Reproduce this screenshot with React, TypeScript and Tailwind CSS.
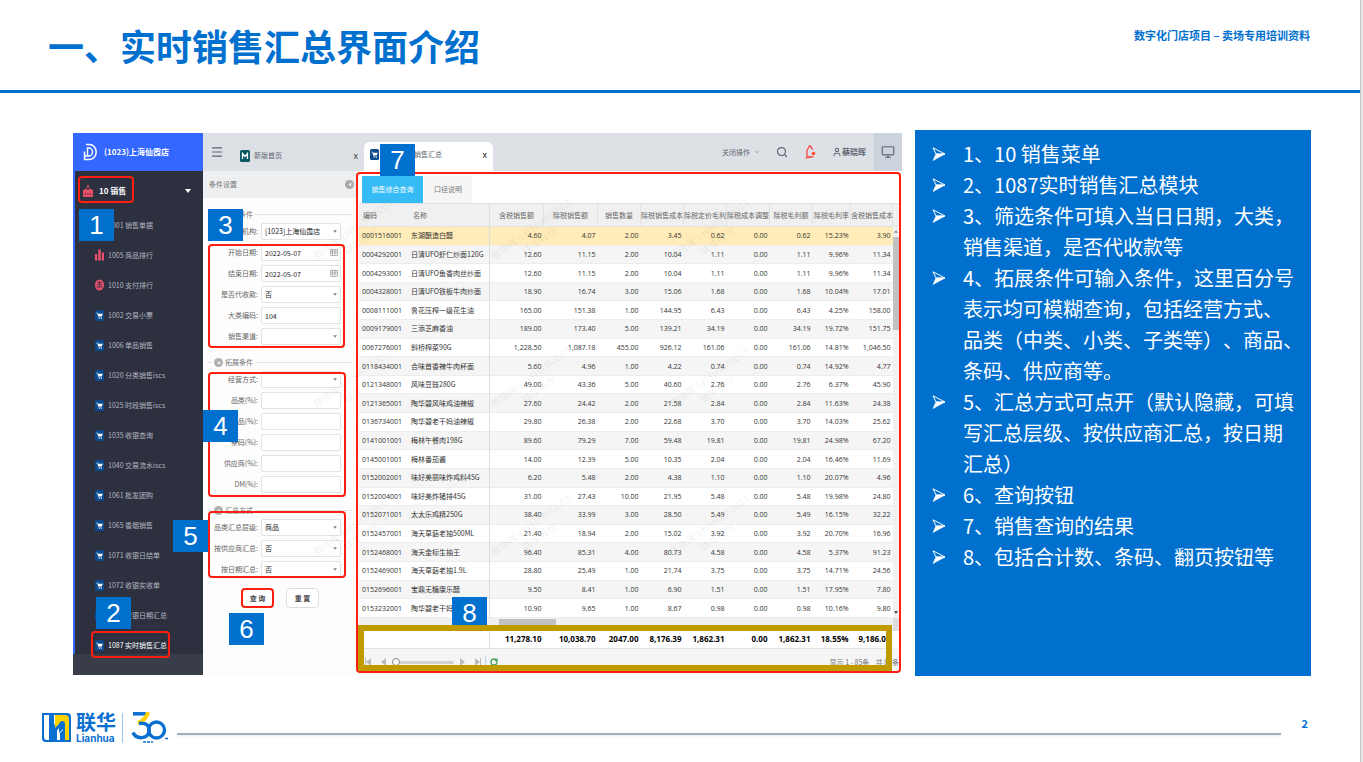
import { ChevronDown, Menu, Monitor, RotateCw, Search, User } from 'lucide-react';
import clsx from 'clsx';

const menus = [
  { name: '1001 销售单据', icon: 'cart' },
  { name: '1005 商品排行', icon: 'bars' },
  { name: '1010 支付排行', icon: 'pay' },
  { name: '1002 交易小票', icon: 'cart' },
  { name: '1006 单品销售', icon: 'cart' },
  { name: '1020 分类销售iscs', icon: 'cart' },
  { name: '1025 时段销售iscs', icon: 'cart' },
  { name: '1035 收银查询', icon: 'cart' },
  { name: '1040 交易流水iscs', icon: 'cart' },
  { name: '1061 批发团购', icon: 'cart' },
  { name: '1065 香烟销售', icon: 'cart' },
  { name: '1071 收银日结单', icon: 'cart' },
  { name: '1072 收银实收单', icon: 'cart' },
  { name: '1073 收银日期汇总', icon: 'cart' },
  { name: '1087 实时销售汇总', icon: 'cart' },
];

type FieldProps = {
  id: string;
  label: string;
  value?: string;
  kind?: 'text' | 'select' | 'date';
};

const baseFields: FieldProps[] = [
  { id: 'org', label: '*机构:', value: '[1023]上海仙霞店', kind: 'select' },
  { id: 'start', label: '开始日期:', value: '2022-05-07', kind: 'date' },
  { id: 'end', label: '结束日期:', value: '2022-05-07', kind: 'date' },
  { id: 'agent', label: '是否代收款:', value: '否', kind: 'select' },
  { id: 'category', label: '大类编码:', value: '104' },
  { id: 'channel', label: '销售渠道:', kind: 'select' },
];

const extraFields: FieldProps[] = [
  { id: 'mode', label: '经营方式:', kind: 'select' },
  { id: 'class', label: '品类(%):' },
  { id: 'goods', label: '商品(%):' },
  { id: 'barcode', label: '条码(%):' },
  { id: 'supplier', label: '供应商(%):' },
  { id: 'dm', label: 'DM(%):' },
];

const groupFields: FieldProps[] = [
  { id: 'level', label: '品类汇总层级:', value: '商品', kind: 'select' },
  { id: 'bySupplier', label: '按供应商汇总:', value: '否', kind: 'select' },
  { id: 'byDate', label: '按日期汇总:', value: '否', kind: 'select' },
];

const headers = [
  '含税销售额',
  '除税销售额',
  '销售数量',
  '除税销售成本',
  '除税定价毛利',
  '除税成本调整',
  '除税毛利额',
  '除税毛利率',
  '含税销售成本',
];

const rows = [
  ['0001516001', '东湖酿造白醋', '4.60', '4.07', '2.00', '3.45', '0.62', '0.00', '0.62', '15.23%', '3.90'],
  ['0004292001', '日清UFO虾仁炒面120G', '12.60', '11.15', '2.00', '10.04', '1.11', '0.00', '1.11', '9.96%', '11.34'],
  ['0004293001', '日清UFO鱼香肉丝炒面', '12.60', '11.15', '2.00', '10.04', '1.11', '0.00', '1.11', '9.96%', '11.34'],
  ['0004328001', '日清UFO铁板牛肉炒面', '18.90', '16.74', '3.00', '15.06', '1.68', '0.00', '1.68', '10.04%', '17.01'],
  ['0008111001', '鲁花压榨一级花生油', '165.00', '151.38', '1.00', '144.95', '6.43', '0.00', '6.43', '4.25%', '158.00'],
  ['0009179001', '三添芝麻香油', '189.00', '173.40', '5.00', '139.21', '34.19', '0.00', '34.19', '19.72%', '151.75'],
  ['0067276001', '斜桥榨菜90G', '1,228.50', '1,087.18', '455.00', '926.12', '161.06', '0.00', '161.06', '14.81%', '1,046.50'],
  ['0118434001', '合味首香辣牛肉杯面', '5.60', '4.96', '1.00', '4.22', '0.74', '0.00', '0.74', '14.92%', '4.77'],
  ['0121348001', '风味豆豉280G', '49.00', '43.36', '5.00', '40.60', '2.76', '0.00', '2.76', '6.37%', '45.90'],
  ['0121365001', '陶华碧风味鸡油辣椒', '27.60', '24.42', '2.00', '21.58', '2.84', '0.00', '2.84', '11.63%', '24.38'],
  ['0136734001', '陶华碧老干妈油辣椒', '29.80', '26.38', '2.00', '22.68', '3.70', '0.00', '3.70', '14.03%', '25.62'],
  ['0141001001', '梅林午餐肉198G', '89.60', '79.29', '7.00', '59.48', '19.81', '0.00', '19.81', '24.98%', '67.20'],
  ['0145001001', '梅林番茄酱', '14.00', '12.39', '5.00', '10.35', '2.04', '0.00', '2.04', '16.46%', '11.69'],
  ['0152002001', '味好美丽味炸鸡料45G', '6.20', '5.48', '2.00', '4.38', '1.10', '0.00', '1.10', '20.07%', '4.96'],
  ['0152004001', '味好美炸猪排45G', '31.00', '27.43', '10.00', '21.95', '5.48', '0.00', '5.48', '19.98%', '24.80'],
  ['0152071001', '太太乐鸡精250G', '38.40', '33.99', '3.00', '28.50', '5.49', '0.00', '5.49', '16.15%', '32.22'],
  ['0152457001', '海天草菇老抽500ML', '21.40', '18.94', '2.00', '15.02', '3.92', '0.00', '3.92', '20.70%', '16.96'],
  ['0152468001', '海天金标生抽王', '96.40', '85.31', '4.00', '80.73', '4.58', '0.00', '4.58', '5.37%', '91.23'],
  ['0152469001', '海天草菇老抽1.9L', '28.80', '25.49', '1.00', '21.74', '3.75', '0.00', '3.75', '14.71%', '24.56'],
  ['0152696001', '宝鼎无糖康乐醋', '9.50', '8.41', '1.00', '6.90', '1.51', '0.00', '1.51', '17.95%', '7.80'],
  ['0153232001', '陶华碧老干妈鲜椒', '10.90', '9.65', '1.00', '8.67', '0.98', '0.00', '0.98', '10.16%', '9.80'],
];

const totals = ['11,278.10', '10,038.70', '2047.00', '8,176.39', '1,862.31', '0.00', '1,862.31', '18.55%', '9,186.00'];

const notes = [
  '1、10 销售菜单',
  '2、1087实时销售汇总模块',
  '3、筛选条件可填入当日日期，大类，\n销售渠道，是否代收款等',
  '4、拓展条件可输入条件，这里百分号\n表示均可模糊查询，包括经营方式、\n品类（中类、小类、子类等）、商品、\n条码、供应商等。',
  '5、汇总方式可点开（默认隐藏，可填\n写汇总层级、按供应商汇总，按日期\n汇总）',
  '6、查询按钮',
  '7、销售查询的结果',
  '8、包括合计数、条码、翻页按钮等',
];

// Numbered blue square that sits over the part it explains
function Badge({ n, className }: { n: number; className: string }) {
  return (
    <span
      className={clsx(
        "absolute z-20 flex h-8 w-[35px] items-center justify-center bg-[#0070cf] font-['Liberation_Sans',sans-serif] text-[26px] leading-none text-white",
        className
      )}
    >
      {n}
    </span>
  );
}

function Frame({ className }: { className: string }) {
  return (
    <span
      className={clsx('pointer-events-none absolute z-10 rounded-sm border-2 border-[#ff1f10]', className)}
    />
  );
}

function CartIcon() {
  return (
    <svg className="h-[11px] w-[9px] shrink-0" viewBox="0 0 18 22" aria-hidden="true">
      <rect width="18" height="22" rx="3" fill="#0b4a8c" />
      <path d="M2.500 6h2.500l2.500 8h6" fill="none" stroke="#fff" strokeWidth="1.3" />
      <path d="M5.500 7.500h10L13.800 12.500H7.200z" fill="#fff" />
      <circle cx="8.4" cy="16.3" r="1.2" fill="#fff" />
      <circle cx="12.8" cy="16.3" r="1.2" fill="#fff" />
    </svg>
  );
}

function MenuIcon({ icon }: { icon: string }) {
  if (icon === 'bars') {
    return (
      <svg className="h-3 w-[9px] shrink-0" viewBox="0 0 18 24" fill="#e8506e" aria-hidden="true">
        <rect y="10" width="4.500" height="13" />
        <rect x="6.500" y="1" width="5" height="22" />
        <rect x="13.500" y="7" width="4.500" height="16" />
      </svg>
    );
  }
  if (icon === 'pay') {
    return (
      <svg className="h-3 w-[9px] shrink-0" viewBox="0 0 18 24" aria-hidden="true">
        <ellipse cx="9" cy="12" rx="9" ry="11" fill="#e8506e" />
        <path
          d="M5 7h8M9 4.500V10M4.500 10.500H13c-1 4-3 6.500-5.500 7-3 .5-4-2-2.500-3.500S10 14 15.500 18"
          fill="none"
          stroke="#2d303f"
          strokeWidth="1.5"
        />
      </svg>
    );
  }
  return <CartIcon />;
}

function Sidebar() {
  return (
    <nav className="relative flex w-[130px] shrink-0 flex-col bg-[#2d303f] text-[7px] text-[#b4b7c2]">
      <div className="flex h-[38px] shrink-0 items-center gap-[7px] bg-[#3367ff] pl-2.5 text-[8px] font-bold text-white">
        <svg className="h-[18px] w-3.5" viewBox="0 0 14 18" fill="none" stroke="#fff" aria-hidden="true">
          <path d="M3 1.500h3.500a6.500 7.300 0 0 1 0 15H1.500V8.500" strokeWidth="1.5" />
          <path d="M4.500 13V5H6a3.500 4 0 0 1 0 8H1" strokeWidth="1.4" />
        </svg>
        (1023)上海仙霞店
      </div>
      <div className="min-h-0 flex-1 border-l-2 border-[#3367ff]">
        <button className="flex h-[39px] w-full items-center gap-1.5 pr-3 pl-2 text-[8px] font-bold text-white">
          <svg className="h-3.5 w-2.5" viewBox="0 0 20 26" aria-hidden="true">
            <path d="M4 11l6-8 6 8" fill="none" stroke="#e8506e" strokeWidth="1.5" />
            <circle cx="10" cy="3" r="2" fill="#e8506e" />
            <rect y="10" width="20" height="15" rx="1.500" fill="#e8506e" />
            <path d="M3 17.500h3M8 17.500h3M13 17.500h4M3 20h3M8 20h3M13 20h4" stroke="#7a2438" strokeWidth="1.400" />
          </svg>
          10 销售
          <svg className="ml-auto h-1 w-1.5" viewBox="0 0 6 4" aria-hidden="true">
            <path d="M0 0h6L3 4z" fill="#fff" />
          </svg>
        </button>
        <ul>
          {menus.map((item, i) => (
            <li key={item.name}>
              <a
                href="#"
                className={clsx(
                  'flex h-[30px] items-center gap-1 pl-5',
                  i === menus.length - 1 && 'text-white'
                )}
              >
                <MenuIcon icon={item.icon} />
                {item.name}
              </a>
            </li>
          ))}
        </ul>
      </div>
      <div className="h-[21px] shrink-0 bg-[#393d49]" />
      <Frame className="top-[43px] left-[5px] h-[27px] w-14" />
      <Frame className="bottom-[17px] left-[18px] h-[27px] w-[79px]" />
      <Badge n={1} className="top-[76px] left-1.5" />
      <Badge n={2} className="bottom-[46px] left-[23px]" />
      <Badge n={5} className="-right-[5px] bottom-[123px]" />
    </nav>
  );
}

function TopBar() {
  return (
    <div className="flex h-[38px] bg-[#dde1e6] text-[7px] text-[#5f6670]">
      <button className="w-[35px] pl-[7px]" aria-label="菜单">
        <Menu className="size-3.5" strokeWidth={2} />
      </button>
      <div className="mt-[7px] flex w-[126px] items-center gap-1 pr-1.5 pl-[2px]">
        <svg className="h-3 w-2.5" viewBox="0 0 20 24" aria-hidden="true">
          <rect width="20" height="24" rx="3" fill="#0b5763" />
          <path d="M5 18V7l5 6 5-6v11" fill="none" stroke="#fff" strokeWidth="2.500" />
        </svg>
        新版首页
        <button className="ml-auto text-[9px] text-[#444]">x</button>
      </div>
      <div className="mt-[9px] flex w-[129px] items-center gap-1 rounded-t-md bg-white px-1.5 pb-1">
        <CartIcon />
        1087 实时销售汇总
        <button className="ml-auto text-[9px] text-[#222]">x</button>
      </div>
      <div className="ml-auto flex items-center">
        <button className="flex items-center gap-1">
          关闭操作 <ChevronDown className="size-1.5" />
        </button>
        <Search className="ml-4 size-3" strokeWidth={2.5} />
        <svg className="ml-4 h-3.5 w-3.5" viewBox="0 0 14 14" aria-hidden="true">
          <path
            d="M3.500 11c-1-2-1-5 .500-7.500L5.500 1h1l1 2 1.500 1.500M3.500 11L2.500 12.500h2l1-1.500M4.500 12.500l5-1"
            fill="none"
            stroke="#f4504a"
            strokeWidth="1.400"
          />
          <circle cx="9.500" cy="8.500" r="1.800" fill="#ff4a2a" />
        </svg>
        <User className="ml-3.5 size-2.5" strokeWidth={2.5} />
        <span className="mr-2 text-[8px] font-bold">蔡晓晖</span>
        <button className="flex h-full w-7 items-center justify-center bg-[#cdd3dc]" aria-label="全屏">
          <Monitor className="size-3.5" strokeWidth={2} />
        </button>
      </div>
    </div>
  );
}

function Arrow({ className }: { className: string }) {
  return (
    <svg className={clsx('pointer-events-none', className)} viewBox="0 0 6 4" aria-hidden="true">
      <path d="M0 0h6L3 4z" fill="currentColor" />
    </svg>
  );
}

const control =
  'h-[17px] w-full appearance-none rounded-xs border border-[#e3e3e3] bg-white px-[3px] text-[7px] text-[#222]';

function Field({ id, label, value = '', kind = 'text' }: FieldProps) {
  return (
    <div className="flex h-[21px] items-center gap-[3px] pr-4">
      <label htmlFor={id} className="w-[55px] text-right text-[#666]">
        {label}
      </label>
      <div className="relative flex flex-1">
        {kind === 'select' ? (
          <select id={id} defaultValue={value} className={control}>
            <option value={value}>{value}</option>
          </select>
        ) : (
          <input id={id} defaultValue={value} className={control} />
        )}
        {kind === 'select' && <Arrow className="absolute top-[7px] right-1 h-[3px] w-1 text-[#888]" />}
        {kind === 'date' && (
          <svg className="absolute top-1 right-[3px] size-2" viewBox="0 0 16 16" aria-hidden="true">
            <path
              d="M1 3h14v12H1zM1 6.500h14M1 10h14M5 3v12M10 3v12M4 1v3M12 1v3"
              fill="none"
              stroke="#999"
              strokeWidth="1.300"
            />
          </svg>
        )}
      </div>
    </div>
  );
}

function Group({ title, fields }: { title: string; fields: FieldProps[] }) {
  return (
    <fieldset className="mb-2">
      <div className="flex h-3.5 items-center gap-[2px] px-1 text-[#777]">
        <span className="h-px w-[5px] bg-[#e3e3e3]" />
        <span className="flex size-[9px] items-center justify-center rounded-full bg-[#b0b0b0]">
          <Arrow className="h-[3px] w-1 rotate-180 text-white" />
        </span>
        {title}
        <span className="h-px flex-1 bg-[#e3e3e3]" />
      </div>
      {fields.map((field) => (
        <Field key={field.id} {...field} />
      ))}
    </fieldset>
  );
}

function Filters() {
  return (
    <form className="relative w-[154px] shrink-0 bg-[#fdfdfd] text-[7px]">
      <div className="flex h-[27px] items-center justify-between bg-[#eeeff0] px-1.5 text-[#777]">
        条件设置
        <span className="-mr-[3px] flex size-[9px] items-center justify-center rounded-full bg-[#aaa]">
          <Arrow className="h-[3px] w-1 rotate-90 text-white" />
        </span>
      </div>
      <div className="pt-[9px]">
        <Group title="必选条件" fields={baseFields} />
        <Group title="拓展条件" fields={extraFields} />
        <Group title="汇总方式" fields={groupFields} />
      </div>
      <div className="flex gap-3 pl-[38px]">
        <button type="button" className="relative h-5 w-[33px] rounded-sm border border-[#ddd] bg-white font-bold text-[#444]">
          查 询
          <Frame className="-inset-px" />
        </button>
        <button type="button" className="h-5 w-[33px] rounded-sm border border-[#ddd] bg-white font-bold text-[#444]">
          重 置
        </button>
      </div>
      <Frame className="top-[73px] left-[5px] h-[104px] w-[137px]" />
      <Frame className="top-[201px] left-[5px] h-[125px] w-[138px]" />
      <Frame className="top-[340px] left-[5px] h-[67px] w-[138px]" />
      <Badge n={3} className="top-[38px] left-[5px]" />
      <Badge n={4} className="top-[239px] left-0" />
      <Badge n={6} className="top-[442px] left-[26px]" />
    </form>
  );
}

function Results() {
  return (
    <section className="relative flex min-w-0 flex-1 flex-col bg-white pt-[5px] pr-[3px] pl-[2px] text-[7px]">
      <div className="flex h-[27px] gap-px pl-[3px]">
        <button className="w-[61px] bg-[#36bbf7] text-white">销售综合查询</button>
        <button className="w-12 bg-[#f5f5f5] text-[#777]">口径说明</button>
      </div>
      <div className="flex">
        <table className="h-[446px] w-full table-fixed border-collapse whitespace-nowrap text-[#333]">
          <colgroup>
            <col className="w-12" />
            <col />
            <col className="w-[54px]" />
            <col className="w-[54px]" />
            <col className="w-[43px]" />
            <col className="w-[43px]" />
            <col className="w-[43px]" />
            <col className="w-[43px]" />
            <col className="w-[43px]" />
            <col className="w-[38px]" />
            <col className="w-[42px]" />
          </colgroup>
          <thead>
            <tr className="h-[23px] border-y border-[#e2e2e2] bg-[#f0f0f0] text-[#666]">
              <th className="p-0 pl-1 text-left font-normal">编码</th>
              <th className="border-r border-[#ddd] p-0 pl-1.5 text-left font-normal">名称</th>
              {headers.map((title) => (
                <th key={title} className="border-r border-[#e2e2e2] p-0 text-center font-normal">
                  {title}
                </th>
              ))}
            </tr>
          </thead>
          <tbody>
            {rows.map(([code, name, ...values]) => (
              <tr key={code} className="border-b border-[#ededed] first:bg-[#ffecb8] even:bg-[#f5f5f5]">
                <td className="p-0 pl-[3px] font-['Open_Sans',sans-serif] leading-none">{code}</td>
                <td className="overflow-hidden border-r border-[#ddd] p-0 pl-1 leading-none">{name}</td>
                {values.map((value, i) => (
                  <td key={i} className="p-0 pr-[2px] text-right font-['Open_Sans',sans-serif] leading-none">
                    {value}
                  </td>
                ))}
              </tr>
            ))}
          </tbody>
          <tfoot>
            <tr className="h-[13px] bg-[#f0f0f0]">
              <td colSpan={2} className="p-0" />
              <td colSpan={9} className="p-0 pt-px pl-[9px] align-top">
                <div className="h-1.5 w-[57px] bg-[#c1c1c1]" />
              </td>
            </tr>
            <tr className="h-[18px] border-b border-[#e2e2e2]">
              <td className="p-0" />
              <td className="border-r border-[#ddd] p-0" />
              {totals.map((value, i) => (
                <td
                  key={i}
                  className="p-0 pr-[2px] text-right font-['Open_Sans',sans-serif] text-[8px] leading-none font-bold text-black"
                >
                  {value}
                </td>
              ))}
            </tr>
          </tfoot>
        </table>
        <div className="flex w-1.5 shrink-0 flex-col items-center bg-[#f1f1f1]">
          <div className="h-[23px] w-full border-y border-[#e2e2e2] bg-[#f0f0f0]" />
          <Arrow className="my-1 h-[3px] w-1 rotate-180 text-[#888]" />
          <div className="h-[93px] w-full bg-[#c1c1c1]" />
          <Arrow className="mt-auto mb-1 h-[3px] w-1 text-[#333]" />
          <div className="h-[13px] w-full bg-[#dcdcdc]" />
          <div className="h-[18px] w-full bg-white" />
        </div>
      </div>
      <div className="flex h-6 items-center bg-[#f5f5f5] pt-[2px] pl-1.5 text-[#777]">
        <button aria-label="首页">
          <svg className="h-2 w-1.5" viewBox="0 0 6 8" fill="#bbb" aria-hidden="true">
            <path d="M0 0h1v8H0zM6 0v8L1 4z" />
          </svg>
        </button>
        <button aria-label="上一页" className="ml-2.5">
          <svg className="h-2 w-[5px]" viewBox="0 0 5 8" fill="#bbb" aria-hidden="true">
            <path d="M5 0v8L0 4z" />
          </svg>
        </button>
        <input
          type="range"
          defaultValue={0}
          aria-label="页码"
          className="ml-1.5 h-[3px] w-[62px] appearance-none rounded-full bg-[#d0d0d0] [&::-webkit-slider-thumb]:size-2 [&::-webkit-slider-thumb]:appearance-none [&::-webkit-slider-thumb]:rounded-full [&::-webkit-slider-thumb]:border [&::-webkit-slider-thumb]:border-[#888] [&::-webkit-slider-thumb]:bg-white"
        />
        <button aria-label="下一页" className="ml-1.5">
          <svg className="h-2 w-[5px]" viewBox="0 0 5 8" fill="#bbb" aria-hidden="true">
            <path d="M0 0v8l5-4z" />
          </svg>
        </button>
        <button aria-label="末页" className="ml-2.5">
          <svg className="h-2 w-1.5" viewBox="0 0 6 8" fill="#bbb" aria-hidden="true">
            <path d="M5 0h1v8H5zM0 0v8l5-4z" />
          </svg>
        </button>
        <span className="ml-1 h-3 w-px bg-[#b9d8f0]" />
        <button aria-label="刷新" className="ml-1 text-[#4aa35a]">
          <RotateCw className="size-2" strokeWidth={4} />
        </button>
        <span className="ml-auto whitespace-pre">显示 1 - 85条{'    '}共 85条</span>
      </div>
      <Frame className="top-px right-px bottom-[2px] -left-px" />
      <span className="pointer-events-none absolute right-2.5 bottom-1 left-px z-30 h-[46px] border-[6px] border-[#bf9b00]" />
      <Badge n={7} className="-top-[27px] left-[23px]" />
      <Badge n={8} className="bottom-[46px] left-[95px]" />
    </section>
  );
}

function Watermarks() {
  return (
    <div className="pointer-events-none absolute top-[66px] left-[102px] z-10 grid grid-cols-[repeat(3,178px)] grid-rows-[repeat(3,148px)]">
      {Array.from({ length: 9 }, (_, i) => (
        <p
          key={i}
          className="flex h-[72px] w-[104px] -rotate-[36deg] flex-col items-center justify-center text-[10px] leading-[14px] whitespace-nowrap text-black/8"
        >
          <span>蔡晓晖-LHSHXM0003</span>
          <span>联华股份</span>
        </p>
      ))}
    </div>
  );
}

function Logo() {
  return (
    <div className="flex h-[31px] items-center text-[#0a6fd0]">
      <svg className="h-[29px] w-[29px]" viewBox="0 0 29 29" aria-hidden="true">
        <path d="M0 0h25a4 4 0 0 1 4 4v25H4a4 4 0 0 1-4-4z" fill="#0a6fd0" />
        <path d="M2 2h5v25H5a3 3 0 0 1-3-3z" fill="#fff" />
        <path d="M12 2h2v8l-2 2zM12 27v-6l5-6v5l4-4v11z" fill="#fff" />
        <path d="M13 2h10a4 4 0 0 1 4 4v21h-4V11c0-4-5-4-6 0l-4 4z" fill="#ffd300" />
        <path d="M12 18l3-3v12h-3zM18 20l3-3v10h-3z" fill="#0a6fd0" />
      </svg>
      <div className="ml-[5px] flex flex-col">
        <span className="text-[20px] leading-5 font-bold">联华</span>
        <span className="font-['Inter',sans-serif] text-[10px] leading-3 font-bold">Lianhua</span>
      </div>
      <span className="mx-1.5 h-[30px] w-px bg-[#9cc6ee]" />
      <svg className="ml-[2px] h-[31px] w-[38px]" viewBox="0 0 38 31" fill="none" aria-hidden="true">
        <path d="M2 1.800h13" stroke="#0a6fd0" strokeWidth="3.500" />
        <path d="M17 0c-1 5-4 8.500-10 11" stroke="#ffd300" strokeWidth="4" />
        <path d="M8 11.500c8-1 11 3 10 8-1.500 8-13 8-16 1" stroke="#0a6fd0" strokeWidth="3.500" />
        <circle cx="25.500" cy="18" r="8" stroke="#0a6fd0" strokeWidth="3.300" />
        <path d="M12 30h10M34 26.500h4" stroke="#0a6fd0" strokeWidth="1.500" strokeDasharray="3 1" />
      </svg>
    </div>
  );
}

export default function App() {
  return (
    <div className="flex min-h-screen bg-white font-['Noto_Sans_CJK_SC',sans-serif]">
      <div className="flex min-w-0 flex-1 flex-col">
        <header className="flex h-[93px] items-center justify-between border-b-[3px] border-[#0070cf] pr-[50px] pl-12 text-[#0070cf]">
          <h1 className="text-[36px] leading-none font-bold">一、实时销售汇总界面介绍</h1>
          <p className="pb-5 text-[11px] font-bold">数字化门店项目 – 卖场专用培训资料</p>
        </header>

        <main className="flex gap-[13px] pt-[37px] pr-[49px] pl-[73px]">
          <div className="mt-[3px] flex h-[542px] min-w-0 flex-1">
            <Sidebar />
            <div className="relative flex min-w-0 flex-1 flex-col">
              <TopBar />
              <div className="flex flex-1">
                <Filters />
                <Results />
              </div>
              <Watermarks />
            </div>
          </div>

          <ul className="min-h-[546px] w-[396px] shrink-0 bg-[#0070cf] pt-2 pl-[17px] text-[20px] leading-[31px] text-white [text-spacing-trim:space-all]">
            {notes.map((note) => (
              <li key={note} className="flex gap-[17px]">
                <svg className="mt-[9px] size-3.5 shrink-0" viewBox="0 0 14 14" aria-hidden="true">
                  <path d="M1 .8L13 7H4z" fill="none" stroke="#fff" strokeWidth="1" />
                  <path d="M4 7h9L1 13.500z" fill="#fff" stroke="#fff" strokeWidth=".6" />
                </svg>
                <span className="whitespace-pre-line">{note}</span>
              </li>
            ))}
          </ul>
        </main>

        <footer className="mt-9 flex items-center pr-[52px] pl-[42px]">
          <Logo />
          <div className="mt-3 ml-2 h-[2px] flex-1 bg-[#9fb0bd] shadow-sm" />
          <span className="mb-2 ml-[21px] text-[11px] font-bold text-[#0070cf]">2</span>
        </footer>
      </div>
      <div className="w-[3px] border-l border-[#c4c4c4] bg-[#e6e6e6]" />
    </div>
  );
}
